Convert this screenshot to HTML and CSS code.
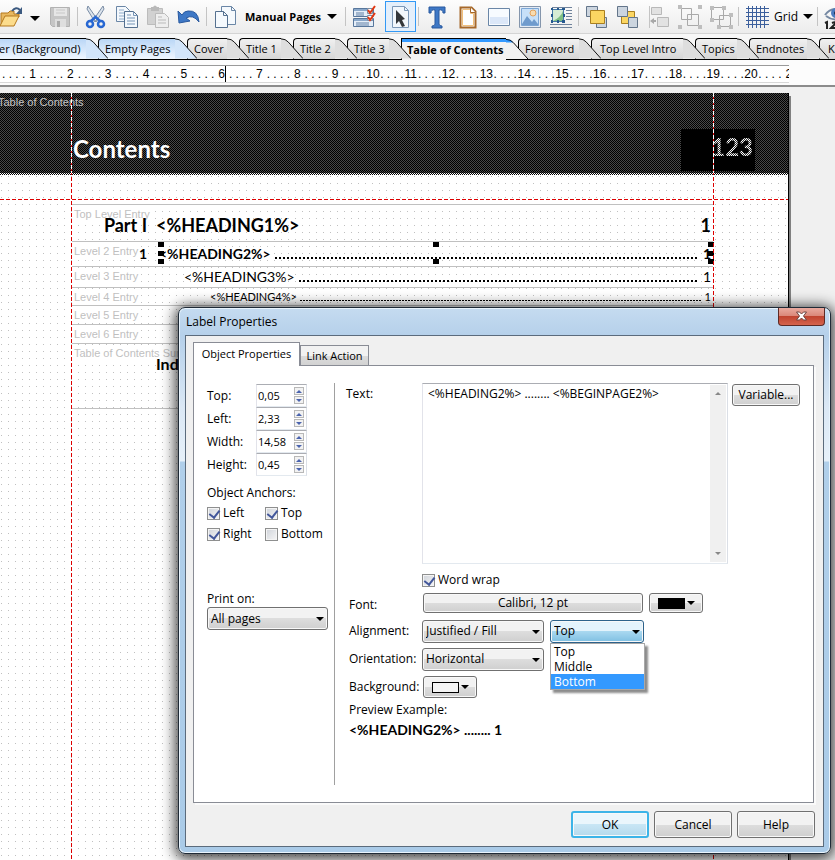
FILE: index.html
```html
<!DOCTYPE html>
<html lang="en">
<head>
<meta charset="utf-8">
<title>Manual Designer</title>
<link rel="stylesheet" href="styles.css">
</head>
<body>
<header class="toolbar">
  <button class="tool first" aria-label="Open"><svg viewBox="0 0 24 24"><path d="M2 8h7l2-2h4v3h5v3H7l-5 9z" fill="#e8b860" stroke="#b5781c"/><path d="M1 21l5-10h14l-5 10z" fill="#fcdc8c" stroke="#b5781c"/><path d="M13 6q4-5 8-1" fill="none" stroke="#3c5a80" stroke-width="2"/><path d="M23 2v7h-6z" fill="#3c5a80"/></svg></button>
  <button class="drop" aria-label="Open recent"><i class="arrow big"></i></button>
  <button class="tool" aria-label="Save"><svg viewBox="0 0 24 24"><path d="M2.500 2.500h19v19H4.500l-2-2z" fill="#c6c6c6" stroke="#b2b2b2"/><path d="M6 3h13v8H6z" fill="#e6e6e6"/><path d="M7 14h11v8H7z" fill="#dedede"/><path d="M9 16h3v6H9z" fill="#aaa"/><path d="M8 5h9M8 8h9" stroke="#c8c8c8"/></svg></button>
  <span class="sep"></span>
  <button class="tool" aria-label="Cut"><svg viewBox="0 0 24 24"><path d="M4 1l9 13-2 3L3 4zM19 1l-9 13 2 3L20 4z" fill="#dbe3ec" stroke="#7a8da5"/><circle cx="6" cy="19" r="3" fill="none" stroke="#2767d2" stroke-width="2.500"/><circle cx="17" cy="19" r="3" fill="none" stroke="#2767d2" stroke-width="2.500"/><path d="M7 16l4.500-4 4.500 4" fill="none" stroke="#2767d2" stroke-width="2.500"/></svg></button>
  <button class="tool" aria-label="Copy"><svg viewBox="0 0 24 24"><path d="M1.500 1.500h9l4 4v11h-13z" fill="#f4f8fc" stroke="#6a86a6"/><path d="M4 5h5M4 8h7M4 11h5M4 14h5" stroke="#90acca"/><path d="M9.500 6.500h9l4 4v12h-13z" fill="#f4f8fc" stroke="#55708f"/><path d="M18.500 6.500v4h4M12 10h4M12 13h8M12 16h8M12 19h8" fill="none" stroke="#7795b6"/></svg></button>
  <button class="tool" aria-label="Paste"><svg viewBox="0 0 24 24"><path d="M1.500 3.500h15v16h-15z" fill="#d1d1d1" stroke="#bcbcbc"/><path d="M5 2h2q2-3 4 0h2v4H5z" fill="#b9b9b9"/><path d="M9.500 8.500h9l4 4v10h-13z" fill="#eee" stroke="#bbb"/><path d="M12 12h4M12 15h8M12 18h8" stroke="#bbb"/></svg></button>
  <button class="tool" aria-label="Undo"><svg viewBox="0 0 24 24"><path d="M1 6l1 12 11-2-4-3q7-4 13 4Q21 5 11 6q-4 0-6 4z" fill="#3e78c6" stroke="#29599f"/></svg></button>
  <span class="sep"></span>
  <button class="tool" aria-label="Pages"><svg viewBox="0 0 24 24"><path d="M8.500 1.500h10l4 4v14h-14z" fill="#f5f9fd" stroke="#6a86a6"/><path d="M18.500 1.500v4h4" fill="none" stroke="#6a86a6"/><path d="M2.500 6.500h8l4 4v12h-12z" fill="#f5f9fd" stroke="#55708f"/><path d="M10.500 6.500v4h4" fill="none" stroke="#55708f"/></svg></button>
  <button class="menu strong">Manual Pages <i class="arrow big"></i></button>
  <span class="sep"></span>
  <button class="tool" aria-label="Options"><svg viewBox="0 0 24 24"><path d="M1.500 3.500h20v8h-20zM1.500 13.500h20v8h-20z" fill="#e5eef8" stroke="#58779c"/><path d="M2 5h18M2 15h19" stroke="#8aa8ca" stroke-width="2"/><path d="M4 8h8M4 10h8M4 18h13M4 20h13" stroke="#5f7fa5"/><path d="M15.500 3.500h5v5h-5zM15.500 10.500h5v5h-5z" fill="#fff" stroke="#7b8da2"/><path d="M16 5l2 3 5-7M16 12l2 3 5-7" fill="none" stroke="#e23812" stroke-width="2"/></svg></button>
  <button class="tool selected" aria-label="Select"><svg viewBox="0 0 24 24"><path d="M3.500 1.500h12l4 4v17h-16z" fill="#f2f7fc" stroke="#7c98b8"/><path d="M15.500 1.500v4h4" fill="none" stroke="#7c98b8"/><path d="M7 5l9 9-3 1 3 6-3 1-3-6-3 3z" fill="#34373b"/></svg></button>
  <span class="sep"></span>
  <button class="tool" aria-label="Text"><svg viewBox="0 0 24 24"><path d="M4 2h16v6h-2q0-4-4-3v14q0 2 3 2v2H7v-2q3 0 3-2V5Q6 4 6 8H4z" fill="#3e78c6" stroke="#29599f"/></svg></button>
  <button class="tool" aria-label="Page box"><svg viewBox="0 0 24 24"><path d="M4.500 2.500h11l4 4v16h-15z" fill="#fff" stroke="#a6682a" stroke-width="2"/><path d="M6.500 4.500h8v4h3v12h-11z" fill="#fdfeff" stroke="#f0bf7c"/><path d="M14.500 2.500v5h5" fill="#fff" stroke="#a6682a"/></svg></button>
  <button class="tool" aria-label="Rectangle"><svg viewBox="0 0 24 24"><path d="M1.500 3.500h21v17h-21z" fill="#f7fbff" stroke="#6a86a6"/><path d="M3 12h18v7H3z" fill="#dbe7f8"/></svg></button>
  <button class="tool" aria-label="Image"><svg viewBox="0 0 24 24"><path d="M1.500 1.500h21v21h-21z" fill="#e3ebf5" stroke="#8596ac"/><path d="M3.500 3.500h17v17h-17z" fill="#c7e0f8" stroke="#7ba6d5"/><circle cx="15" cy="8" r="3" fill="#f8dcb0" stroke="#e2a15c"/><path d="M4 19l5-8 5 6 2-3 4 5v1H4z" fill="#6f9bcd"/></svg></button>
  <button class="tool" aria-label="Wrapped image"><svg viewBox="0 0 24 24"><path d="M3 2.500h20M17 5.500h6M17 8.500h6M17 11.500h6M17 14.500h6M1 19.500h22M1 22.500h22" stroke="#70839c"/><path d="M3.500 4.500h11v12h-11z" fill="#d5ecd4" stroke="#447aa9"/><path d="M4 16Q12 12 14 6v10z" fill="#7fc083"/><path d="M2 3h2v2H2zM8 3h2v2H8zM13 3h3v2h-3zM2 9h2v3H2zM14 9h2v3h-2zM2 15h2v3H2zM8 15h2v3H8zM13 15h3v3h-3z" fill="#24588e"/></svg></button>
  <span class="sep"></span>
  <button class="tool" aria-label="Bring to front"><svg viewBox="0 0 24 24"><path d="M1.500 1.500h11v10h-11zM11.500 12.500h10v10h-10z" fill="#ccd5df" stroke="#63758a"/><path d="M5.500 5.500h14v13h-14z" fill="#fbd662" stroke="#a97f20"/></svg></button>
  <button class="tool" aria-label="Send to back"><svg viewBox="0 0 24 24"><path d="M5.500 6.500h13v12h-13z" fill="#fbd662" stroke="#a97f20"/><path d="M1.500 1.500h10v10h-10zM12.500 12.500h9v10h-9z" fill="#ccd5df" stroke="#63758a"/></svg></button>
  <button class="tool" aria-label="Align"><svg viewBox="0 0 24 24"><path d="M2.500 1v22" stroke="#c4c4c4"/><path d="M4.500 2.500h10v7h-10zM10.500 12.500h11v9h-11z" fill="#e2e2e2" stroke="#b8b8b8"/><path d="M3 16l4-3v2h2v2H7v2z" fill="#a8a8a8"/></svg></button>
  <button class="tool" aria-label="Group"><svg viewBox="0 0 24 24"><path d="M3.500 3.500h10v11h-10zM9.500 9.500h11v11h-11z" fill="none" stroke="#a9a9a9"/><path d="M0 0h4v4H0zM20 0h4v4h-4zM0 20h4v4H0zM20 20h4v4h-4z" fill="#bebebe"/></svg></button>
  <button class="tool" aria-label="Ungroup"><svg viewBox="0 0 24 24"><path d="M2.500 2.500h12v12h-12zM10.500 10.500h11v11h-11z" fill="none" stroke="#a9a9a9"/><path d="M1 1h4v4H1zM13 1h4v4h-4zM1 13h4v4H1zM20 8h4v4h-4zM8 20h4v4H8zM20 20h4v4h-4z" fill="#bebebe"/></svg></button>
  <span class="sep"></span>
  <button class="tool" aria-label="Show grid"><svg viewBox="0 0 24 24"><path d="M3.500 1v22M7.500 1v22M11.500 1v22M15.500 1v22M19.500 1v22M1 3.500h23M1 7.500h23M1 11.500h23M1 15.500h23M1 19.500h23" stroke="#3c5f9c"/></svg></button>
  <button class="menu">Grid <i class="arrow big"></i></button>
  <span class="sep"></span>
  <button class="tool" aria-label="Preview"><svg viewBox="0 0 24 24"><path d="M1 10Q9-1 23 8M2 11q9 7 20 0" fill="none" stroke="#7588a2" stroke-width="2"/><circle cx="12" cy="8" r="5" fill="#4c7bbf"/><circle cx="12" cy="8" r="2" fill="#1b3050"/><path d="M1 18l2-1v7M8 18q4-2 3 1l-4 4h5" fill="none" stroke="#222" stroke-width="2"/></svg></button>
</header>

<nav class="doc-tabs">
  <button class="tab sky"><span class="cap">er (Background)</span><svg viewBox="0 0 24 22"><path d="M0 0Q5 0 8 4L24 22H0z"/><path class="edge" d="M0 .5Q5 .5 8 4L24 22"/></svg></button>
  <button class="tab sky"><span class="cap">Empty Pages</span><svg viewBox="0 0 24 22"><path d="M0 0Q5 0 8 4L24 22H0z"/><path class="edge" d="M0 .5Q5 .5 8 4L24 22"/></svg></button>
  <button class="tab"><span class="cap">Cover</span><svg viewBox="0 0 24 22"><path d="M0 0Q5 0 8 4L24 22H0z"/><path class="edge" d="M0 .5Q5 .5 8 4L24 22"/></svg></button>
  <button class="tab"><span class="cap">Title 1</span><svg viewBox="0 0 24 22"><path d="M0 0Q5 0 8 4L24 22H0z"/><path class="edge" d="M0 .5Q5 .5 8 4L24 22"/></svg></button>
  <button class="tab"><span class="cap">Title 2</span><svg viewBox="0 0 24 22"><path d="M0 0Q5 0 8 4L24 22H0z"/><path class="edge" d="M0 .5Q5 .5 8 4L24 22"/></svg></button>
  <button class="tab"><span class="cap">Title 3</span><svg viewBox="0 0 24 22"><path d="M0 0Q5 0 8 4L24 22H0z"/><path class="edge" d="M0 .5Q5 .5 8 4L24 22"/></svg></button>
  <button class="tab active"><span class="cap">Table of Contents</span><svg viewBox="0 0 24 22"><path d="M0 0Q5 0 8 4L24 22H0z"/><path class="bar" d="M0 0Q5 0 8 4H0z"/><path class="edge" d="M0 .5Q5 .5 8 4L24 22"/></svg></button>
  <button class="tab"><span class="cap">Foreword</span><svg viewBox="0 0 24 22"><path d="M0 0Q5 0 8 4L24 22H0z"/><path class="edge" d="M0 .5Q5 .5 8 4L24 22"/></svg></button>
  <button class="tab wide-cap"><span class="cap">Top Level Intro</span><svg viewBox="0 0 24 22"><path d="M0 0Q5 0 8 4L24 22H0z"/><path class="edge" d="M0 .5Q5 .5 8 4L24 22"/></svg></button>
  <button class="tab"><span class="cap">Topics</span><svg viewBox="0 0 24 22"><path d="M0 0Q5 0 8 4L24 22H0z"/><path class="edge" d="M0 .5Q5 .5 8 4L24 22"/></svg></button>
  <button class="tab"><span class="cap">Endnotes</span><svg viewBox="0 0 24 22"><path d="M0 0Q5 0 8 4L24 22H0z"/><path class="edge" d="M0 .5Q5 .5 8 4L24 22"/></svg></button>
  <button class="tab wide-cap"><span class="cap">K</span></button>
</nav>

<div class="ruler-bar">
  <div class="ruler">
    <div class="scale">
      <span>. . . .<b>1</b></span><span>. . . .<b>2</b></span><span>. . . .<b>3</b></span><span>. . . .<b>4</b></span><span>. . . .<b>5</b></span><span>. . . .<b>6</b></span><span>. . . .<b>7</b></span><span>. . . .<b>8</b></span><span>. . . .<b>9</b></span><span>. . . .<b>10</b></span><span>. . . .<b>11</b></span><span>. . . .<b>12</b></span><span>. . . .<b>13</b></span><span>. . . .<b>14</b></span><span>. . . .<b>15</b></span><span>. . . .<b>16</b></span><span>. . . .<b>17</b></span><span>. . . .<b>18</b></span><span>. . . .<b>19</b></span><span>. . . .<b>20</b></span><span>. . . .<b>2</b></span>
    </div>
    <i class="marker"></i>
  </div>
</div>

<main class="workspace">
  <section class="sheet">
    <div class="masthead">
      <span class="band-name">Table of Contents</span>
      <h1>Contents</h1>
      <div class="folio"><span>123</span></div>
    </div>
    <div class="entries">
      <div class="entry l1"><span class="note">Top Level Entry</span><span class="num">Part I</span><span class="head">&lt;%HEADING1%&gt;</span><span class="pg">1</span></div>
      <div class="entry l2"><span class="note">Level 2 Entry</span><span class="num">1</span><span class="head">&lt;%HEADING2%&gt;</span><i class="leader"></i><span class="pg">1</span>
        <div class="handles"><i></i><i></i><i></i><i></i><i class="gap"></i><i></i><i></i><i></i><i></i></div>
      </div>
      <div class="entry l3"><span class="note">Level 3 Entry</span><span class="num"></span><span class="head">&lt;%HEADING3%&gt;</span><i class="leader"></i><span class="pg">1</span></div>
      <div class="entry l4"><span class="note">Level 4 Entry</span><span class="num"></span><span class="head">&lt;%HEADING4%&gt;</span><i class="leader"></i><span class="pg">1</span></div>
      <div class="entry l5"><span class="note">Level 5 Entry</span></div>
      <div class="entry l6"><span class="note">Level 6 Entry</span></div>
      <div class="entry summary"><span class="note">Table of Contents Sum</span><span class="num"></span><span class="head">Ind</span></div>
    </div>
    <i class="guide left"></i><i class="guide right"></i><i class="guide across"></i>
  </section>
</main>

<section class="dialog" role="dialog" aria-labelledby="dialog-title">
  <header class="titlebar">
    <h2 id="dialog-title">Label Properties</h2>
    <button class="close" aria-label="Close"><svg viewBox="0 0 12 10"><path d="M1 1h3l2 2 2-2h3L8 5l3 4H8L6 7 4 9H1l3-4z" fill="#fff" stroke="#6c4440"/></svg></button>
  </header>
  <div class="client">
    <div class="page-tabs"><button class="ptab on">Object Properties</button><button class="ptab">Link Action</button></div>
    <div class="panel">
      <div class="geometry">
        <div class="spins">
          <label for="top">Top:</label><div class="spin"><input id="top" value="0,05"><span class="steps"><button aria-label="Increase top"><i class="up"></i></button><button aria-label="Decrease top"><i class="down"></i></button></span></div>
          <label for="left">Left:</label><div class="spin"><input id="left" value="2,33"><span class="steps"><button aria-label="Increase left"><i class="up"></i></button><button aria-label="Decrease left"><i class="down"></i></button></span></div>
          <label for="width">Width:</label><div class="spin"><input id="width" value="14,58"><span class="steps"><button aria-label="Increase width"><i class="up"></i></button><button aria-label="Decrease width"><i class="down"></i></button></span></div>
          <label for="height">Height:</label><div class="spin"><input id="height" value="0,45"><span class="steps"><button aria-label="Increase height"><i class="up"></i></button><button aria-label="Decrease height"><i class="down"></i></button></span></div>
        </div>
        <p class="anchors-title">Object Anchors:</p>
        <div class="anchors">
          <label class="check"><input type="checkbox" checked>Left</label>
          <label class="check"><input type="checkbox" checked>Top</label>
          <label class="check"><input type="checkbox" checked>Right</label>
          <label class="check"><input type="checkbox">Bottom</label>
        </div>
        <label class="print-label" for="print">Print on:</label>
        <div class="combo"><select id="print"><option>All pages</option></select><i class="arrow"></i></div>
      </div>
      <div class="content">
        <div class="text-row">
          <label for="text">Text:</label>
          <div class="memo"><textarea id="text">&lt;%HEADING2%&gt; ........ &lt;%BEGINPAGE2%&gt;</textarea><div class="scroll"><i class="up"></i><i class="down"></i></div></div>
          <button class="btn variable">Variable...</button>
        </div>
        <div class="wrap-row"><label class="check"><input type="checkbox" checked>Word wrap</label></div>
        <div class="row font-row"><label for="font">Font:</label><button id="font" class="btn font">Calibri, 12 pt</button><button class="btn swatch" aria-label="Font colour"><i class="chip dark"></i><i class="arrow"></i></button></div>
        <div class="row align-row"><label for="align">Alignment:</label><div class="combo wide"><select id="align"><option>Justified / Fill</option></select><i class="arrow"></i></div>
          <div class="combo hot"><select aria-label="Vertical alignment"><option>Top</option></select><i class="arrow"></i>
            <ul class="options"><li>Top</li><li>Middle</li><li class="hover">Bottom</li></ul></div>
        </div>
        <div class="row"><label for="orient">Orientation:</label><div class="combo wide"><select id="orient"><option>Horizontal</option></select><i class="arrow"></i></div></div>
        <div class="row"><label for="back">Background:</label><button id="back" class="btn swatch"><i class="chip"></i><i class="arrow"></i></button></div>
        <p class="preview-label">Preview Example:</p>
        <p class="preview">&lt;%HEADING2%&gt; ........ 1</p>
      </div>
    </div>
    <footer class="actions"><button class="btn ok">OK</button><button class="btn">Cancel</button><button class="btn">Help</button></footer>
  </div>
</section>
</body>
</html>
```
FILE: styles.css
```css
* { box-sizing: border-box; }
html, body { height: 100%; }
body {
  margin: 0;
  display: flex;
  flex-direction: column;
  position: relative;
  overflow: hidden;
  background: #f0f0f0;
  color: #000;
  font: 12px/16px "Open Sans", "Noto Sans", sans-serif;
}
button, input, select, textarea { font: inherit; color: inherit; margin: 0; }
button { padding: 0; border: 0; background: none; white-space: nowrap; }
h1, h2, p, ul { margin: 0; padding: 0; }
i { font-style: normal; }

.arrow {
  display: inline-block;
  width: 0;
  height: 0;
  border: 4px solid transparent;
  border-top-color: #000;
  border-bottom: 0;
}
.arrow.big { border-width: 5px 5px 0; }

/* toolbar */
.toolbar {
  flex: none;
  display: flex;
  align-items: center;
  height: 34px;
  background: linear-gradient(#fdfdfd, #ececec);
  border-bottom: 1px solid #d4d4d4;
  white-space: nowrap;
}
.tool {
  flex: none;
  width: 31px;
  height: 31px;
  display: flex;
  align-items: center;
  justify-content: center;
}
.tool svg { width: 24px; height: 24px; }
.tool.first { margin-left: -5px; }
.tool.selected { margin-left: 6px; border: 1px solid #3399f5; background: #e4effb; }
.drop { flex: none; width: 18px; }
.sep { flex: none; width: 1px; height: 19px; margin: 0 2px; background: #c4c4c4; }
.menu { flex: none; display: flex; align-items: center; gap: 5px; padding: 0 2px; }
.menu.strong { font-weight: 700; font-size: 11px; gap: 6px; padding: 0 6px 0 5px; }

/* document tabs */
.doc-tabs {
  flex: none;
  display: grid;
  grid-template-columns: 116px 89px 52px 54px 54px 54px 117px 73px 104px 54px 70px 60px;
  height: 26px;
  margin-left: -18px;
  padding-top: 4px;
  background: #f7f7f7;
  border-bottom: 1px solid #000;
}
.tab {
  position: relative;
  height: 21px;
  margin-right: 12px;
  padding-left: 6px;
  text-align: left;
  border: 1px solid #000;
  border-width: 1px 0 0 1px;
  border-radius: 4px 0 0 0;
  background: linear-gradient(#f0f0f0, #d6d6d6);
  font-size: 11px;
}
.tab:first-child { padding-left: 16px; }
.tab.wide-cap { padding-left: 8px; }
.tab.sky { background: linear-gradient(#b9d6f6, #f0f7ff); }
.tab .cap { position: relative; z-index: 2; }
.tab svg { position: absolute; z-index: 1; left: 100%; top: -1px; width: 22px; height: 21px; fill: #dedede; }
.tab.sky svg { fill: #d2e5fa; }
.tab .edge { fill: none; stroke: #000; }
.tab.active {
  height: 22px;
  padding-left: 5px;
  border-radius: 0;
  background: linear-gradient(#3399ff 3px, #f2f2f2 3px);
  font-weight: 700;
}
.tab.active svg { fill: #f2f2f2; height: 22px; }
.tab .bar { fill: #3399ff; }

/* ruler */
.ruler-bar { flex: none; height: 27px; padding-top: 5px; background: #fcfcfc; border-bottom: 2px solid #8c8c8c; }
.ruler {
  position: relative;
  width: calc(100% - 46px);
  height: 18px;
  overflow: hidden;
  background: #fff;
  border-top: 1px solid #9a9a9a;
  border-bottom: 1px solid #d8d8d8;
}
.scale { display: flex; width: 796px; padding-left: 2px; font: 12px/16px "Liberation Sans", sans-serif; }
.scale span { flex: 1 0 0; display: flex; white-space: pre; }
.scale b { flex: 1; font-weight: 400; text-align: center; }
.marker { position: absolute; left: 225px; top: 0; width: 1px; height: 17px; background: #000; }

/* design sheet */
.workspace { flex: 1; display: flex; padding: 6px 46px 0 0; }
.sheet {
  position: relative;
  flex: 1;
  border-right: 1px solid #000;
  box-shadow: 2px 3px 0 #808080;
  background: conic-gradient(from 270deg at 1px 1px, #c0c0c0 25%, transparent 0) 1px 6px / 7px 7px #fff;
}
.masthead {
  position: relative;
  height: 82px;
  padding: 2px 33px 0 0;
  background:
    repeating-conic-gradient(#000 0 25%, #fff 0 50%) 0 100% / 2px 2px repeat-x,
    repeating-conic-gradient(#000 0 25%, #484848 0 50%) 0 0 / 2px 2px;
  color: #fff;
}
.band-name { display: block; margin-left: -2px; color: #c4c4c4; font: 11px/14px "Liberation Sans", sans-serif; }
.masthead h1 { position: absolute; left: 73px; bottom: 11px; font: 700 24px/30px Lato, sans-serif; }
.folio {
  position: absolute;
  right: 33px;
  bottom: 4px;
  width: 74px;
  height: 42px;
  background: #000;
  text-align: right;
  font: 700 24px/36px Lato, sans-serif;
}
.folio span {
  background: repeating-conic-gradient(#fff 0 25%, #333 0 50%) 0 0 / 2px 2px;
  background-clip: text;
  color: transparent;
  padding-right: 2px;
}
.entries { margin: 29px 75px 0 72px; font-family: Lato, sans-serif; border-bottom: 1px solid #c0c0c0; }
.entry {
  position: relative;
  display: flex;
  align-items: center;
  border-top: 1px solid #c0c0c0;
  white-space: nowrap;
  padding-right: 2px;
}
.note {
  position: absolute;
  left: 0;
  top: 3px;
  padding-left: 2px;
  color: #bfbfbf;
  background: #fff;
  font: 11px/13px "Liberation Sans", sans-serif;
}
.num { position: relative; width: 75px; margin-right: 9px; text-align: right; }
.head { position: relative; }
.pg { margin-left: auto; }
.leader { flex: 1; align-self: flex-end; height: 2px; margin: 0 4px 7px; background: repeating-linear-gradient(90deg, #000 0 2px, transparent 2px 4px); }
.l1 { height: 37px; font-weight: 700; font-size: 18px; padding-top: 4px; }
.l2 { height: 25px; font-weight: 700; font-size: 14px; }
.l2 .head { padding-left: 3px; }
.l3 { height: 21px; font-size: 14px; }
.l3 .head { padding-left: 28px; }
.l3 .leader { margin: 0 4px 5px; }
.l4 { height: 18px; font-size: 11px; }
.l4 .head { padding-left: 54px; }
.l4 .leader { height: 1px; margin: 0 4px 4px 3px; background: repeating-linear-gradient(90deg, #000 0 2px, transparent 2px 3px); }
.l5, .l6 { height: 19px; }
.summary { height: 65px; align-items: flex-start; font-weight: 700; font-size: 16px; line-height: 20px; padding-top: 10px; }
.handles {
  position: absolute;
  inset: 0 -1px 2px 86px;
  display: grid;
  grid-template-columns: repeat(3, 6px);
  justify-content: space-between;
  align-content: space-between;
}
.handles i { width: 6px; height: 5px; background: #000; }
.handles .gap { visibility: hidden; }
.guide { position: absolute; }
.guide.left, .guide.right {
  top: 0;
  bottom: 0;
  width: 1px;
  background:
    repeating-linear-gradient(#fff 0 4px, #d00 4px 6px) 0 0 / 1px 80px no-repeat,
    repeating-linear-gradient(#d00 0 4px, transparent 4px 6px);
}
.guide.left { left: 71px; }
.guide.right { right: 74px; }
.guide.across { left: 0; right: 0; top: 106px; height: 1px; background: repeating-linear-gradient(90deg, #d00 0 4px, transparent 4px 6px); }

/* dialog window */
.dialog {
  position: absolute;
  left: 178px;
  right: 4px;
  top: 307px;
  display: flex;
  flex-direction: column;
  padding: 0 6px 6px;
  border: 1px solid #1f2a36;
  border-radius: 7px;
  background: linear-gradient(#c5dbf0, #b5d0ea 28px, #dbe8f5 100px, #e6f0f9 153px, #b0cfea 154px, #aacbe8);
  box-shadow: inset 0 0 0 1px #e9f4fd, 0 2px 14px 3px rgba(0, 0, 0, .75);
}
.titlebar { display: flex; justify-content: space-between; height: 27px; }
.titlebar h2 { font: inherit; font-size: 12px; line-height: 27px; padding-left: 1px; }
.close {
  width: 47px;
  height: 18px;
  margin-right: -1px;
  border: 1px solid #5d2a25;
  border-top: 0;
  border-radius: 0 0 4px 4px;
  background: linear-gradient(#e9aa9f, #d98576 50%, #c04430 50%, #d5644d);
}
.close svg { width: 13px; height: 10px; }
.client { border: 1px solid #5b6b7c; padding: 6px 9px 8px 7px; background: #f0f0f0; }
.page-tabs { display: flex; align-items: flex-end; height: 23px; }
.ptab { border: 1px solid #898c95; border-bottom: 0; }
.ptab { height: 20px; width: 69px; background: linear-gradient(#f2f2f2 50%, #dcdcdc 50%, #d2d2d2); font-size: 11px; }
.ptab.on { position: relative; width: 107px; height: 24px; margin-bottom: -1px; padding-bottom: 2px; background: #fff; }
.panel {
  display: flex;
  height: 438px;
  padding: 17px 13px;
  border: 1px solid #898c95;
  background: #fff;
  box-shadow: 2px 2px 0 #fafafa;
}
.geometry { width: 128px; border-right: 1px solid #a0a0a0; }
.spins { display: grid; grid-template-columns: 49px 51px; grid-auto-rows: 23px; align-items: center; padding-top: 1px; }
.spin { display: flex; height: 23px; border: 1px solid #abadb3; border-color: #abadb3 #dbdfe6 #e3e9ef #e2e3ea; padding: 2px 2px 2px 1px; }
.spin input { width: 36px; border: 0; padding: 0; outline: 0; background: none; font-size: 11px; }
.steps { display: flex; flex-direction: column; width: 12px; gap: 1px; }
.steps button { flex: 1; display: flex; align-items: center; justify-content: center; border: 1px solid #b8b8b8; background: #f2f2f2; }
.up, .down { width: 0; height: 0; border: 3px solid transparent; }
.up { border-top: 0; border-bottom-color: #4a63ad; }
.down { border-bottom: 0; border-top-color: #4a63ad; }
.anchors-title { margin-top: 9px; }
.anchors { display: grid; grid-template-columns: 58px 66px; row-gap: 5px; margin-top: 4px; }
.check { display: flex; align-items: center; gap: 3px; }
.check input {
  appearance: none;
  position: relative;
  flex: none;
  width: 13px;
  height: 13px;
  border: 1px solid #8e8f8f;
  background: linear-gradient(135deg, #cfd3da, #f6f6f6);
  box-shadow: inset 0 0 0 1px #f4f4f4;
}
.check input:checked::after {
  content: "";
  position: absolute;
  left: 3px;
  top: 0;
  width: 5px;
  height: 8px;
  border: solid #42579b;
  border-width: 0 2px 2px 0;
  transform: rotate(38deg);
}
.print-label { display: block; margin-top: 49px; }
.combo { position: relative; width: 122px; height: 23px; }
.geometry .combo { width: 121px; }
.combo select {
  appearance: none;
  width: 100%;
  height: 100%;
  padding: 0 3px;
  border: 1px solid #707070;
  border-radius: 3px;
  background: linear-gradient(#f2f2f2 50%, #dddddd 50%, #cfcfcf);
  box-shadow: inset 0 0 0 1px #f8f8f8;
}
.combo .arrow { position: absolute; right: 4px; top: 10px; }
.content { flex: 1; min-width: 0; padding-left: 11px; }
.text-row { display: flex; }
.text-row label { width: 76px; padding-top: 3px; }
.memo { flex: 1; display: flex; height: 181px; border: 1px solid #abadb3; border-color: #abadb3 #dbdfe6 #e3e9ef #e2e3ea; padding: 1px; }
.memo textarea { flex: 1; min-width: 0; border: 0; outline: 0; resize: none; padding: 1px 4px; }
.scroll { display: flex; flex-direction: column; align-items: center; justify-content: space-between; width: 16px; padding: 7px 0; background: #f0f0f0; }
.scroll .up { border-bottom-color: #888; }
.scroll .down { border-top-color: #888; }
.btn {
  height: 27px;
  width: 78px;
  border: 1px solid #707070;
  border-radius: 3px;
  background: linear-gradient(#f2f2f2 50%, #dddddd 50%, #cfcfcf);
  box-shadow: inset 0 0 0 1px #f8f8f8;
}
.btn.variable { width: 68px; height: 22px; margin: 1px 0 0 4px; }
.wrap-row { padding: 8px 0 5px 76px; }
.row { display: flex; align-items: center; height: 28px; }
.row label { width: 76px; padding-left: 3px; }
.row .combo.hot { width: 94px; margin-left: 6px; }
.combo.hot select { border-color: #2c628b; background: linear-gradient(#e3f3fc 50%, #a9d8f0 50%, #7fbfe2); }
.btn.font { width: 220px; height: 20px; margin: 0 6px 0 1px; }
.font-row { height: 24px; align-items: flex-start; }
.font-row label { padding-top: 4px; }
.swatch { display: flex; align-items: center; justify-content: center; gap: 2px; width: 54px; }
.font-row .swatch { height: 20px; }
.row > #back { height: 22px; margin-left: 1px; }
.chip { width: 27px; height: 11px; border: 1px solid #000; background: #f4f4f4; }
.chip.dark { background: #000; }
.options {
  position: absolute;
  z-index: 3;
  top: 100%;
  left: 0;
  width: 95px;
  list-style: none;
  border: 1px solid #a8a8a8;
  background: #fff;
  box-shadow: 3px 3px 2px rgba(0, 0, 0, .45);
}
.options li { padding-left: 3px; line-height: 15px; }
.options .hover { background: #3399ff; color: #fff; }
.preview-label { padding: 1px 0 0 3px; }
.preview { padding: 2px 0 0 3px; font: 700 14px/20px Lato, sans-serif; }
.actions { display: flex; justify-content: flex-end; gap: 5px; padding-top: 8px; margin-right: -1px; }
.btn.ok { border: 2px solid #3cb4e8; background: linear-gradient(#eaf6fc 50%, #c8e6f5 50%, #b5d9ec); }
```
